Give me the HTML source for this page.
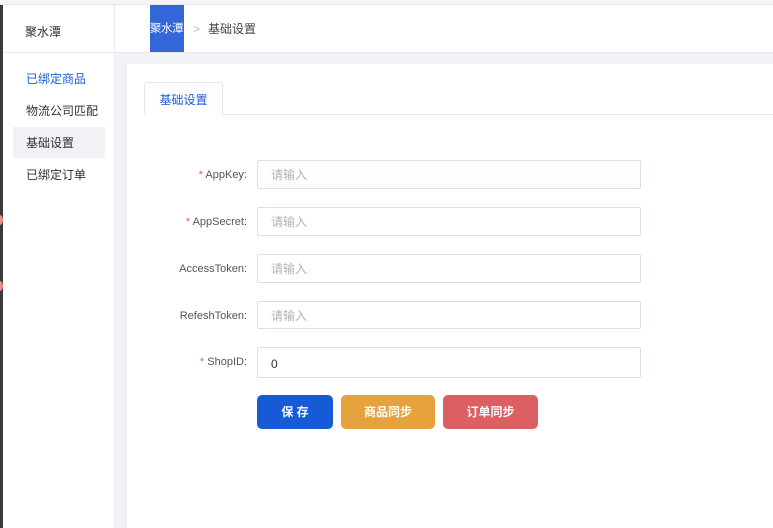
<!DOCTYPE html>
<html><head><meta charset="utf-8"><style>
*{margin:0;padding:0;box-sizing:border-box}
body{width:773px;height:528px;overflow:hidden;background:#fff;font-family:"Liberation Sans","Noto Sans CJK SC",sans-serif;font-size:12px;color:#303133;position:relative}
.abs{position:absolute}
.topline{left:0;top:0;width:773px;height:5px;background:#f5f5f7;border-bottom:1px solid #e4e6eb}
.lbar{left:0;top:5px;width:3px;height:523px;background:#3a3a3a}
.dot{left:-3px;width:6px;height:10px;border-radius:50%;background:#f08a8a}
.side{left:3px;top:5px;width:112px;height:523px;border-right:1px solid #e8eaee;background:#fff}
.side .logo{height:48px;border-bottom:1px solid #e8eaee;padding:18px 0 0 22px;font-size:12px}
.mi{position:absolute;left:10px;width:92px;height:31px;line-height:33px;padding-left:13px}
.content{left:115px;top:53px;width:658px;height:475px;background:#f0f2f5}
.card{left:127px;top:64px;width:646px;height:464px;background:#fff}
.tab{left:144px;top:82px;width:79px;height:33px;border:1px solid #e4e7ed;border-bottom:1px solid #fff;border-radius:3px 3px 0 0;color:#1d5ad4;text-align:center;line-height:35px;background:#fff}
.tabline{left:222px;top:114px;width:551px;height:1px;background:#e4e7ed}
.lab{position:absolute;right:526px;text-align:right;font-size:11px;color:#555}
.lab b{color:#e06060;font-weight:normal}
.inp{position:absolute;left:257px;width:384px;border:1px solid #dcdfe6;border-radius:2px;padding-left:13px;color:#b0b3b9;font-size:12px}
.btn{position:absolute;top:395px;height:34px;border-radius:5px;color:#fff;text-align:center;line-height:34px;font-size:12px;font-weight:bold}
</style></head><body>
<div class="abs topline"></div>
<div class="abs side">
<div class="logo">聚水潭</div>
<div class="mi" style="top:58px;color:#1d5ad4">已绑定商品</div>
<div class="mi" style="top:90px">物流公司匹配</div>
<div class="mi" style="top:122px;background:#f0f2f5">基础设置</div>
<div class="mi" style="top:154px">已绑定订单</div>
</div>
<div class="abs lbar"></div>
<div class="abs dot" style="top:215px"></div>
<div class="abs dot" style="top:281px"></div>
<div class="abs" style="left:150px;top:5px;width:34px;height:48px;background:#3366d6;color:#fff;line-height:49px;font-size:11.5px;white-space:nowrap;overflow:visible;letter-spacing:-0.5px">聚水潭</div>
<div class="abs" style="left:193px;top:5px;line-height:49px;color:#bbb">&gt;</div>
<div class="abs" style="left:208px;top:5px;line-height:49px;color:#444">基础设置</div>
<div class="abs" style="left:115px;top:52px;width:658px;height:1px;background:#e8eaee"></div>
<div class="abs content"></div>
<div class="abs card"></div>
<div class="abs tab">基础设置</div>
<div class="abs tabline"></div>

<div class="lab" style="top:169px"><b>* </b>AppKey:</div>
<div class="inp" style="top:160px;height:29px;line-height:29px;background:#fefefc">请输入</div>
<div class="lab" style="top:216px"><b>* </b>AppSecret:</div>
<div class="inp" style="top:207px;height:29px;line-height:29px">请输入</div>
<div class="lab" style="top:263px">AccessToken:</div>
<div class="inp" style="top:254px;height:29px;line-height:29px">请输入</div>
<div class="lab" style="top:310px">RefeshToken:</div>
<div class="inp" style="top:301px;height:28px;line-height:28px">请输入</div>
<div class="lab" style="top:356px"><b>* </b>ShopID:</div>
<div class="inp" style="top:347px;height:31px;line-height:33px;color:#333">0</div>

<div class="btn" style="left:257px;width:76px;background:#165ad6">保 存</div>
<div class="btn" style="left:341px;width:94px;background:#e6a23c">商品同步</div>
<div class="btn" style="left:443px;width:95px;background:#dc5f61">订单同步</div>
</body></html>
